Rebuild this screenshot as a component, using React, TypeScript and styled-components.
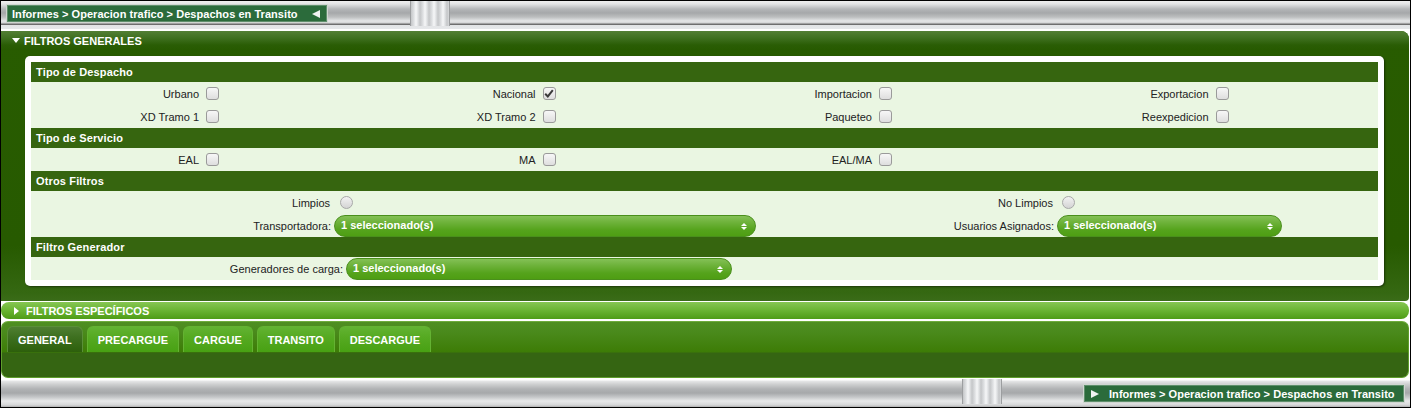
import React from "react";
import styled, { createGlobalStyle, css } from "styled-components";

const GlobalStyle = createGlobalStyle`
  html, body { margin: 0; padding: 0; background: #ffffff; }
  body { font-family: "Liberation Sans", Arial, sans-serif; font-size: 11px; color: #222; }
  * { box-sizing: border-box; }
`;

const Frame = styled.div`
  width: 1411px;
  height: 408px;
  border: 1px solid #000;
  background: #fff;
  display: flex;
  flex-direction: column;
  overflow: hidden;
`;

const silver = css`
  background: linear-gradient(
    to bottom,
    #efefef 0px,
    #e2e3e4 3px,
    #b4b6b8 8px,
    #a6a8aa 12px,
    #bcbebf 16px,
    #e6e7e8 20px,
    #d2d3d4 22px,
    #727272 23px,
    #6a6a6a 24px,
    #e2e4e6 24px,
    #e6e8ea 28px,
    #ffffff 28px
  );
`;

const TopBar = styled.div`
  ${silver}
  height: 29px;
  display: flex;
  align-items: flex-start;
  padding: 4px 0 0 6px;
  flex-shrink: 0;
`;

const BottomBar = styled.div`
  height: 29px;
  margin-top: 1px;
  background: linear-gradient(
    to bottom,
    #ffffff 0px,
    #ffffff 1px,
    #e6e7e8 2px,
    #d0d1d2 5px,
    #b0b2b4 10px,
    #a6a8aa 14px,
    #c4c6c8 18px,
    #e8e9ea 22px,
    #d6d7d8 26px,
    #9a9a9a 29px
  );
  display: flex;
  align-items: flex-start;
  padding: 6px 0 0 0;
  flex-shrink: 0;
`;

const Crumb = styled.div<{ $right?: boolean; $ml?: number }>`
  height: 17px;
  width: 320px;
  margin-left: ${(p) => p.$ml ?? 0}px;
  background: #2b6b3b;
  border: 1px solid #5f8f6c;
  box-shadow: 0 0 0 1px #cfd6d0;
  color: #fff;
  font-weight: bold;
  font-size: 11px;
  letter-spacing: 0.05px;
  display: flex;
  align-items: center;
  padding: 0 0 0 ${(p) => (p.$right ? "6px" : "4px")};
  gap: ${(p) => (p.$right ? "10px" : "6px")};
  flex-shrink: 0;
`;

const CrumbText = styled.span`
  white-space: nowrap;
  flex: 1;
`;

const Tri = styled.span<{ $dir: "left" | "right" | "down" }>`
  width: 0;
  height: 0;
  flex-shrink: 0;
  ${(p) =>
    p.$dir === "left"
      ? css`
          border-top: 4px solid transparent;
          border-bottom: 4px solid transparent;
          border-right: 8px solid #f2f2f2;
          margin-right: 6px;
        `
      : p.$dir === "right"
      ? css`
          border-top: 4px solid transparent;
          border-bottom: 4px solid transparent;
          border-left: 8px solid #f2f2f2;
        `
      : css`
          border-left: 4px solid transparent;
          border-right: 4px solid transparent;
          border-top: 5px solid #ffffff;
        `}
`;

const SmallTri = styled.span`
  width: 0;
  height: 0;
  border-top: 4px solid transparent;
  border-bottom: 4px solid transparent;
  border-left: 5px solid #ffffff;
  flex-shrink: 0;
`;

const Grip = styled.div<{ $ml: number; $mt: number }>`
  margin-left: ${(p) => p.$ml}px;
  margin-top: ${(p) => p.$mt}px;
  width: 40px;
  height: 25px;
  flex-shrink: 0;
  background: repeating-linear-gradient(
    to right,
    #c4c6c8 0px,
    #dfe1e3 3px,
    #f6f7f8 5px,
    #dfe1e3 7px,
    #c4c6c8 9px
  );
  border-left: 1px solid #9c9ea0;
  border-right: 1px solid #9c9ea0;
`;

const Panel = styled.div`
  margin: 1px 1px 0 0;
  height: 270px;
  flex-shrink: 0;
  background: linear-gradient(to bottom, #285c00 0px, #275a00 215px, #356812 262px, #3a6c18 270px);
  border-radius: 0 8px 4px 0;
  display: flex;
  flex-direction: column;
`;

const PanelHeader = styled.div`
  height: 19px;
  background: linear-gradient(to bottom, #537f35 0px, #3f7020 7px, #2a5d05 14px, #275a00 19px);
  border-radius: 0 8px 0 0;
  color: #fff;
  font-weight: bold;
  font-size: 11px;
  display: flex;
  align-items: center;
  gap: 4px;
  padding-left: 11px;
`;

const Card = styled.div`
  margin: 6px 25px 0 24px;
  background: #fff;
  border-radius: 5px;
  padding: 6px;
  box-shadow: 1px 1px 2px rgba(0, 0, 0, 0.45);
`;

const CardInner = styled.div`
  background: #eaf6e2;
`;

const SectionHeader = styled.div`
  height: 20px;
  background: #36650f;
  color: #fff;
  font-weight: bold;
  font-size: 11px;
  letter-spacing: 0.15px;
  display: flex;
  align-items: center;
  padding-left: 5px;
`;

const Grid = styled.div<{ $cols: string }>`
  display: grid;
  grid-template-columns: ${(p) => p.$cols};
  grid-auto-rows: 23px;
`;

const Label = styled.div<{ $pr?: number }>`
  display: flex;
  align-items: center;
  justify-content: flex-end;
  padding-right: ${(p) => p.$pr ?? 0}px;
  font-size: 11px;
  color: #222;
  white-space: nowrap;
`;

const Cell = styled.div`
  display: flex;
  align-items: center;
`;

const Check = styled.span<{ $ml?: number }>`
  margin-left: ${(p) => p.$ml ?? 7}px;
  width: 13px;
  height: 13px;
  border: 1px solid #9a9a9a;
  border-radius: 3px;
  background: linear-gradient(to bottom, #f7f7f7, #dedede);
  display: flex;
  align-items: center;
  justify-content: center;
`;

const Radio = styled.span<{ $ml?: number }>`
  margin-left: ${(p) => p.$ml ?? 7}px;
  width: 13px;
  height: 13px;
  border: 1px solid #a8a8a8;
  border-radius: 50%;
  background: linear-gradient(to bottom, #f2f2f2, #d4d4d4);
`;

const Select = styled.div<{ $w: number; $ml?: number }>`
  margin-left: ${(p) => p.$ml ?? 1}px;
  width: ${(p) => p.$w}px;
  height: 22px;
  border-radius: 11px;
  border: 1px solid #4a8f1c;
  background: linear-gradient(to bottom, #84c156 0px, #6fb33c 6px, #55a31c 14px, #4c9c10 22px);
  color: #fff;
  font-weight: bold;
  font-size: 11px;
  display: flex;
  align-items: center;
  justify-content: space-between;
  padding: 0 8px 2px 6px;
`;

const Arrows = styled.span`
  display: flex;
  flex-direction: column;
  gap: 1px;
  margin-top: 3px;
`;

const ArrowUp = styled.span`
  width: 0;
  height: 0;
  border-left: 3px solid transparent;
  border-right: 3px solid transparent;
  border-bottom: 3px solid #fff;
`;

const ArrowDown = styled.span`
  width: 0;
  height: 0;
  border-left: 3px solid transparent;
  border-right: 3px solid transparent;
  border-top: 3px solid #fff;
`;

const SpecBar = styled.div`
  margin: 1px 1px 0 0;
  height: 17px;
  border-radius: 8px;
  background: linear-gradient(to bottom, #86c653 0px, #6bb534 8px, #4e9c16 17px);
  color: #fff;
  font-weight: bold;
  font-size: 11px;
  display: flex;
  align-items: center;
  gap: 7px;
  padding-left: 13px;
  flex-shrink: 0;
`;

const TabsPanel = styled.div`
  margin: 2px 1px 0 0;
  height: 57px;
  border-radius: 7px;
  border: 1px solid #5f9e2c;
  border-top-color: #6eab3c;
  background: linear-gradient(to bottom, #4f8f22 0px, #4a8a1c 10px, #3d7c06 30px, #356512 31px, #356512 100%);
  display: flex;
  flex-direction: column;
  padding: 4px 0 0 5px;
  flex-shrink: 0;
`;

const TabRow = styled.div`
  display: flex;
  gap: 4px;
  height: 26px;
`;

const Tab = styled.div<{ $active?: boolean }>`
  height: 26px;
  padding: 0 10px;
  border-radius: 6px 6px 0 0;
  color: #fff;
  font-weight: bold;
  font-size: 11px;
  display: flex;
  align-items: center;
  border: 1px solid ${(p) => (p.$active ? "#5a8f38" : "#64b232")};
  border-bottom: none;
  background: ${(p) =>
    p.$active
      ? "linear-gradient(to bottom, #4f7f32 0px, #3e7020 10px, #2c5e0a 26px)"
      : "linear-gradient(to bottom, #62b332 0px, #56aa22 10px, #47a012 26px)"};
`;

const CheckBox = ({ checked }: { checked?: boolean }) => (
  <Check>
    {checked && (
      <svg width="10" height="9" viewBox="0 0 10 9">
        <path d="M1.2 4.8 L3.8 7.4 L8.8 1.2" stroke="#3a3a3a" strokeWidth="2" fill="none" />
      </svg>
    )}
  </Check>
);

const SelectBox = ({ w }: { w: number }) => (
  <Select $w={w}>
    <span>1 seleccionado(s)</span>
    <Arrows>
      <ArrowUp />
      <ArrowDown />
    </Arrows>
  </Select>
);

const despacho: [string, boolean][] = [
  ["Urbano", false],
  ["Nacional", true],
  ["Importacion", false],
  ["Exportacion", false],
  ["XD Tramo 1", false],
  ["XD Tramo 2", false],
  ["Paqueteo", false],
  ["Reexpedicion", false],
];

const servicio = ["EAL", "MA", "EAL/MA"];

const fourCols = "168px 168.5px 168px 168.5px 168px 168.5px 168px 168.5px";

export default function App() {
  return (
    <>
      <GlobalStyle />
      <Frame>
        <TopBar>
          <Crumb>
            <CrumbText>Informes &gt; Operacion trafico &gt; Despachos en Transito</CrumbText>
            <Tri $dir="left" />
          </Crumb>
          <Grip $ml={83} $mt={-4} />
        </TopBar>

        <Panel>
          <PanelHeader>
            <Tri $dir="down" />
            <span>FILTROS GENERALES</span>
          </PanelHeader>
          <Card>
            <CardInner>
              <SectionHeader>Tipo de Despacho</SectionHeader>
              <Grid $cols={fourCols}>
                {despacho.map(([l, c]) => (
                  <React.Fragment key={l}>
                    <Label>{l}</Label>
                    <Cell>
                      <CheckBox checked={c} />
                    </Cell>
                  </React.Fragment>
                ))}
              </Grid>
              <SectionHeader>Tipo de Servicio</SectionHeader>
              <Grid $cols={fourCols}>
                {servicio.map((l) => (
                  <React.Fragment key={l}>
                    <Label>{l}</Label>
                    <Cell>
                      <CheckBox />
                    </Cell>
                  </React.Fragment>
                ))}
              </Grid>
              <SectionHeader>Otros Filtros</SectionHeader>
              <Grid $cols="302px 424px 299px 1fr">
                <Label $pr={3}>Limpios</Label>
                <Cell>
                  <Radio />
                </Cell>
                <Label $pr={3}>No Limpios</Label>
                <Cell>
                  <Radio $ml={6} />
                </Cell>
                <Label $pr={2}>Transportadora:</Label>
                <Cell>
                  <SelectBox w={422} />
                </Cell>
                <Label $pr={2}>Usuarios Asignados:</Label>
                <Cell>
                  <SelectBox w={225} />
                </Cell>
              </Grid>
              <SectionHeader>Filtro Generador</SectionHeader>
              <Grid $cols="314px 1fr">
                <Label $pr={2}>Generadores de carga:</Label>
                <Cell>
                  <SelectBox w={386} />
                </Cell>
              </Grid>
            </CardInner>
          </Card>
        </Panel>

        <SpecBar>
          <SmallTri />
          <span>FILTROS ESPECÍFICOS</span>
        </SpecBar>

        <TabsPanel>
          <TabRow>
            <Tab $active>GENERAL</Tab>
            <Tab>PRECARGUE</Tab>
            <Tab>CARGUE</Tab>
            <Tab>TRANSITO</Tab>
            <Tab>DESCARGUE</Tab>
          </TabRow>
        </TabsPanel>

        <BottomBar>
          <Grip $ml={961} $mt={-6} />
          <Crumb $right $ml={82}>
            <Tri $dir="right" />
            <CrumbText>Informes &gt; Operacion trafico &gt; Despachos en Transito</CrumbText>
          </Crumb>
        </BottomBar>
      </Frame>
    </>
  );
}
